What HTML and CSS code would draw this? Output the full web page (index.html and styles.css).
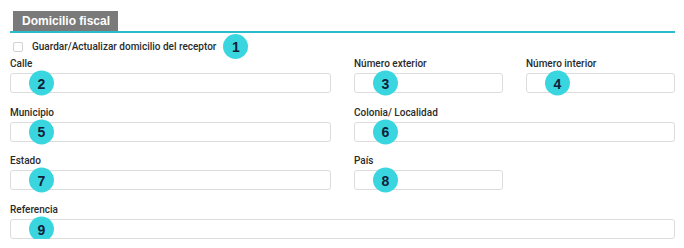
FILE: index.html
```html
<!DOCTYPE html>
<html lang="es">
<head>
    <meta charset="UTF-8">
    <meta name="viewport" content="width=device-width, initial-scale=1.0">
    <title>Domicilio fiscal</title>
    <link rel="stylesheet" href="styles.css">
</head>
<body>
    <div class="page">
        <div class="section-head">
            <span class="section-title">Domicilio fiscal</span>
        </div>

        <label class="check-row">
            <input type="checkbox" class="check">
            <span class="check-text">Guardar/Actualizar domicilio del receptor</span>
            <span class="badge badge-inline">1</span>
        </label>

        <div class="form-grid">
            <div class="field span-2">
                <label>Calle</label>
                <div class="input-wrap"><input type="text"><span class="badge">2</span></div>
            </div>
            <div class="field">
                <label>Número exterior</label>
                <div class="input-wrap"><input type="text"><span class="badge">3</span></div>
            </div>
            <div class="field">
                <label>Número interior</label>
                <div class="input-wrap"><input type="text"><span class="badge">4</span></div>
            </div>

            <div class="field span-2">
                <label>Municipio</label>
                <div class="input-wrap"><input type="text"><span class="badge">5</span></div>
            </div>
            <div class="field span-2">
                <label>Colonia/ Localidad</label>
                <div class="input-wrap"><input type="text"><span class="badge">6</span></div>
            </div>

            <div class="field span-2">
                <label>Estado</label>
                <div class="input-wrap"><input type="text"><span class="badge">7</span></div>
            </div>
            <div class="field">
                <label>País</label>
                <div class="input-wrap"><input type="text"><span class="badge">8</span></div>
            </div>

            <div class="field span-4">
                <label>Referencia</label>
                <div class="input-wrap"><input type="text"><span class="badge">9</span></div>
            </div>
        </div>
    </div>
</body>
</html>
```

FILE: styles.css
```css
* {
    margin: 0;
    padding: 0;
    box-sizing: border-box;
}

body {
    background-color: #ffffff;
    font-family: Roboto, "Liberation Sans", Arial, sans-serif;
    color: #2b2b2b;
}

.page {
    padding: 10px 9px 0 10px;
}

.section-head {
    border-bottom: 2px solid #2bbccc;
    padding-left: 3px;
}

.section-title {
    display: inline-block;
    height: 20px;
    line-height: 20px;
    padding: 0 8px 0 9px;
    background-color: #7a7a7a;
    color: #ffffff;
    font-family: "Liberation Sans", Arial, sans-serif;
    font-weight: bold;
    font-size: 12px;
}

.check-row {
    display: flex;
    align-items: center;
    height: 13px;
    margin-top: 7px;
    padding-left: 3px;
}

.check {
    appearance: none;
    width: 10px;
    height: 10px;
    border: 1px solid #d2d2d2;
    border-radius: 2px;
    background-color: #ffffff;
    margin-right: 9px;
}

.check-text,
.field label {
    font-size: 10px;
    font-weight: 500;
    line-height: 13px;
    color: #2b2b2b;
}

.form-grid {
    display: grid;
    grid-template-columns: repeat(4, 1fr);
    column-gap: 23px;
    row-gap: 12.7px;
    margin-top: 4px;
}

.span-2 {
    grid-column: span 2;
}

.span-4 {
    grid-column: span 4;
}

.field label {
    display: block;
    margin-bottom: 3px;
}

.input-wrap {
    position: relative;
}

.input-wrap input {
    display: block;
    width: 100%;
    height: 20px;
    border: 1px solid #dcdcdc;
    border-radius: 3px;
    background-color: #ffffff;
    outline: none;
}

.badge {
    display: flex;
    align-items: center;
    justify-content: center;
    width: 25px;
    height: 25px;
    border-radius: 50%;
    background-color: #3ad6df;
    color: #10213a;
    font-family: "Liberation Sans", Arial, sans-serif;
    font-weight: bold;
    font-size: 14px;
}

.input-wrap .badge {
    position: absolute;
    left: 19px;
    top: 50%;
    transform: translateY(-50%);
}

.badge-inline {
    margin: -6px 0 -6px 7px;
    flex-shrink: 0;
}
```
